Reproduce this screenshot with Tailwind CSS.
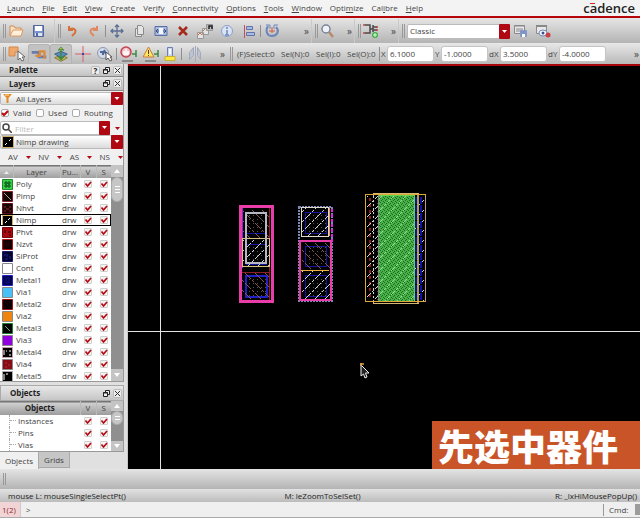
<!DOCTYPE html>
<html lang="en">
<head>
    <meta charset="UTF-8">
    <meta name="viewport" content="width=device-width, initial-scale=1.0">
    <title>Layout Editor</title>
    <script src="https://cdn.jsdelivr.net/npm/@tailwindcss/browser@4"></script>
</head>
<body class="flex flex-col h-screen overflow-hidden bg-[#ececec] text-[#444] text-[8px] leading-[12px] font-['Open_Sans','Noto_Sans',sans-serif]">

    <!-- menu bar -->
    <header class="flex items-center h-[18px] shrink-0 pl-[7px] pr-[5px] bg-[#f3f3f3] border-b-2 border-[#b5060c]">
        <nav id="menu" class="flex gap-[8px]"></nav>
        <div class="relative ml-auto text-[13px] leading-[14px] font-semibold text-[#222]">cadence<span class="absolute left-[7px] top-[2px] w-[5px] h-px bg-[#d22]"></span></div>
    </header>

    <!-- toolbar 1 -->
    <div class="flex h-[25px] shrink-0 pt-px bg-linear-to-b from-[#e6e6e6] to-[#b4b4b4]">
        <div class="flex items-center w-[55px] shrink-0 pl-[3px] border-r border-[#c9c9c9]">
            <i class="w-[3px] h-[14px] border-x border-[#999]"></i>
            <button aria-label="Open" class="w-[22px] h-[20px]"><svg viewBox="0 0 22 20"><path d="M4 15V5h4l1 2h6v2" fill="#fbe3c4" stroke="#d08a52"/><path d="M4 15l3-6h10l-2 6z" fill="#fff0dc" stroke="#d99a66"/></svg></button>
            <button aria-label="Save" class="w-[22px] h-[20px]"><svg viewBox="0 0 22 20"><path d="M5.500 4.500h10v11h-10z" fill="#7d93cc" stroke="#52659c"/><path d="M7 5h7v5H7z" fill="#fff"/><path d="M7 12h7v3H7z" fill="#dfe5f4"/><path d="M8 12h2v3H8z" fill="#52659c"/></svg></button>
        </div>
        <div class="flex items-center w-[257px] shrink-0 pl-[3px] pr-[2px] border-r border-[#c9c9c9]">
            <i class="w-[3px] h-[14px] border-x border-[#999]"></i>
            <button aria-label="Undo" class="w-[22px] h-[20px]"><svg viewBox="0 0 22 20" fill="none" stroke="#d4703c" stroke-width="2"><path d="M8 9c3-3 8-1 6 3l-3 3"/><path d="M8 5v4h4"/></svg></button>
            <button aria-label="Redo" class="w-[22px] h-[20px]"><svg viewBox="0 0 22 20" fill="none" stroke="#dd8a60" stroke-width="2"><path d="M14 9c-3-3-8-1-6 3l3 3"/><path d="M14 5v4h-4"/></svg></button>
            <i class="w-px h-[12px] bg-[#8e8e8e]"></i>
            <button aria-label="Move" class="w-[22px] h-[20px]"><svg viewBox="0 0 22 20" fill="none" stroke="#5b6f94" stroke-width="1.300"><path d="M11 4v12M5 10h12M9 6l2-2 2 2M9 14l2 2 2-2M7 8l-2 2 2 2M15 8l2 2-2 2"/></svg></button>
            <button aria-label="Copy" class="w-[22px] h-[20px]"><svg viewBox="0 0 22 20" fill="#e4e4e4" stroke="#8a8a8a"><path d="M7.500 7.500h6v8h-6z"/><path d="M9.500 4.500h4l2 2v7h-6z"/></svg></button>
            <button aria-label="Stretch" class="w-[22px] h-[20px]"><svg viewBox="0 0 22 20"><path d="M5 5.500h12v9H5z" fill="#a9bae0" stroke="#5a6fa4"/><path d="M9 7h4v6H9z" fill="#f4f6fc"/><path d="M9 10H6m2-2l-2 2 2 2M13 10h3m-2-2l2 2-2 2" fill="none" stroke="#34508c"/></svg></button>
            <button aria-label="Delete" class="w-[22px] h-[20px]"><svg viewBox="0 0 22 20" stroke="#a32a1c" stroke-width="2.500"><path d="M7 6l8 8M15 6l-8 8"/></svg></button>
            <button aria-label="Repeat" class="w-[22px] h-[20px]"><svg viewBox="0 0 22 20" fill="#e4e4e4" stroke="#999"><path d="M3.500 11.500h6v6h-6zM8.500 7.500h6v6h-6z"/><path d="M12.500 3.500h6v6h-6z" fill="#bbb"/><path d="M15 8V5h3v3" stroke="#222" fill="none" stroke-width="1.500"/><path d="M4 14l2-2 2 2M9 10l2-2" stroke="#d4703c" fill="none"/></svg></button>
            <button aria-label="Info" class="w-[22px] h-[20px]"><svg viewBox="0 0 22 20"><circle cx="11" cy="10" r="5.500" fill="#dbe4f3" stroke="#8aa0c8"/><path d="M11 6v2M11 9v5M9 14h4" stroke="#6c88c0" stroke-width="1.500"/></svg></button>
            <button aria-label="Align" class="w-[22px] h-[20px]"><svg viewBox="0 0 22 20"><path d="M6.500 4v13" stroke="#d04858"/><path d="M8.500 5.500h6v3h-6zM8.500 11.500h8v3h-8z" fill="#a9bbe2" stroke="#5f75aa"/></svg></button>
            <i class="w-px h-[12px] bg-[#8e8e8e]"></i>
            <button aria-label="Rotate" class="w-[22px] h-[20px]"><svg viewBox="0 0 22 20" fill="none"><path d="M7 5c-3 5-1 10 4 10s8-5 4-9" stroke="#6c86bc" stroke-width="2"/><path d="M5 4h4v4M17 4h-4v4" stroke="#6c86bc"/><path d="M11 6v6M8 10h6" stroke="#d45a3c"/></svg></button>
            <span class="ml-auto text-[10px]">»</span>
        </div>
        <div class="flex items-center w-[43px] shrink-0 pl-[3px] pr-[2px] border-r border-[#c9c9c9]">
            <i class="w-[3px] h-[14px] border-x border-[#999]"></i>
            <button aria-label="Zoom" class="w-[20px] h-[20px]"><svg viewBox="0 0 20 20"><path d="M11 11l4 5" stroke="#b9896a" stroke-width="2.500"/><circle cx="8" cy="8" r="4" fill="#eef3fa" stroke="#7c8596" stroke-width="1.500"/></svg></button>
            <span class="ml-auto text-[10px]">»</span>
        </div>
        <div class="flex items-center w-[44px] shrink-0 pl-[3px] pr-[2px] border-r border-[#c9c9c9]">
            <i class="w-[3px] h-[14px] border-x border-[#999]"></i>
            <button aria-label="Hierarchy" class="w-[20px] h-[20px]"><svg viewBox="0 0 20 20" fill="none"><path d="M4 4h5v8H4M9 8h3M12 4v7M12 6h4M12 9h4" stroke="#4a4a4a" stroke-width="1.500"/><path d="M3 3v2M3 11v2M16 5v2M16 8v2" stroke="#c04038" stroke-width="1.500"/><circle cx="14" cy="14" r="3" fill="#3fae4a"/><path d="M12 14h4M14 12v4" stroke="#dfd"/></svg></button>
            <span class="ml-auto text-[10px]">»</span>
        </div>
        <div class="flex items-center grow pl-[3px]">
            <i class="w-[3px] h-[14px] border-x border-[#999] mr-[2px]"></i>
            <div class="relative w-[103px] h-[15px]">
                <select aria-label="Workspace" class="appearance-none w-full h-full pl-[2px] bg-white border border-[#bbb] rounded-[2px]"><option>Classic</option></select>
                <svg class="absolute right-0 top-0 w-[11px] h-[15px] pointer-events-none" viewBox="0 0 11 15"><rect width="11" height="15" rx="1" fill="#b00812"/><path d="M3 6h5L5.500 9z" fill="#fff"/></svg>
            </div>
            <button aria-label="Save workspace" class="w-[22px] h-[20px]"><svg viewBox="0 0 22 20"><path d="M4.500 4.500h10v8h-10z" fill="#e8e8e8" stroke="#8a8a8a"/><path d="M4 5h11M6 8h7M6 10h5" stroke="#888"/><path d="M10.500 9.500h6v6h-6z" fill="#7d93cc" stroke="#8898c0"/><path d="M12 13h3v3h-3z" fill="#fff"/></svg></button>
            <button aria-label="Delete workspace" class="w-[22px] h-[20px]"><svg viewBox="0 0 22 20"><path d="M4.500 4.500h10v8h-10z" fill="#e8e8e8" stroke="#8a8a8a"/><path d="M4 5h11" stroke="#888" stroke-width="2"/><ellipse cx="11" cy="12" rx="4" ry="3" fill="#fff" stroke="#6c86bc"/><circle cx="11" cy="12" r="1.500" fill="#34508c"/><circle cx="16" cy="14" r="2.500" fill="#cc4048"/></svg></button>
        </div>
    </div>

    <!-- toolbar 2 -->
    <div class="flex h-[21px] shrink-0 bg-linear-to-b from-[#e8e8e8] to-[#b9b9b9]">
        <div class="flex items-center w-[227px] shrink-0 pl-[3px]">
            <i class="w-[3px] h-[14px] border-x border-[#999]"></i>
            <button aria-label="Partial select" class="w-[22px] h-[20px]"><svg viewBox="0 0 22 20"><path d="M3 3h9v5H9v4H3z" fill="#f0a868" stroke="#d08a52"/><path d="M12 7v9l2-2 2 3 2-1-2-3h3z" fill="#fff" stroke="#666"/></svg></button>
            <button aria-label="Wire" class="w-[22px] h-[20px] rounded-[2px] bg-[#c2c2c2] border border-[#b4b4b4]"><svg viewBox="0 0 22 20" fill="none"><path d="M3 8h8v5h8" stroke="#6c7ca8" stroke-width="3"/><path d="M7 12h5V7h5v8" stroke="#dc8a3c" stroke-width="2.500"/></svg></button>
            <button aria-label="Layers" class="w-[22px] h-[20px] rounded-[2px] bg-[#c2c2c2] border border-[#b4b4b4]"><svg viewBox="0 0 22 20"><path d="M4 14l7-3 7 3-7 4z" fill="#c8b850" stroke="#7c7430"/><path d="M4 10l7-3 7 3-7 4z" fill="#5a8ac0" stroke="#34607c"/><path d="M11 15V3M8 6l3-3 3 3M8 13l3 3 3-3" fill="none" stroke="#3f8a38" stroke-width="1.500"/><path d="M10 4h2" stroke="#e0c840"/></svg></button>
            <button aria-label="Cross" class="w-[22px] h-[20px]"><svg viewBox="0 0 22 20"><path d="M11 2v16M3 10h16" stroke="#d86068"/><path d="M10 10h2" stroke="#44a" stroke-width="2"/></svg></button>
            <button aria-label="Snap" class="w-[22px] h-[20px]"><svg viewBox="0 0 22 20"><circle cx="9" cy="9" r="5.500" fill="#d4dae6" stroke="#8c98ae"/><path d="M6 8h3v3M10 6l2 4" stroke="#4c66a0" stroke-width="2" fill="none"/><path d="M12 8v8l2-2 2 3 2-1-2-3h2z" fill="#fff" stroke="#555"/></svg></button>
            <i class="w-px h-[12px] bg-[#8e8e8e]"></i>
            <button aria-label="Stop" class="w-[22px] h-[20px]"><svg viewBox="0 0 22 20"><path d="M5 17h11" stroke="#555"/><path d="M15 10h4M19 6v7" stroke="#3c8a44" stroke-width="1.500"/><circle cx="9" cy="8" r="5" fill="#f0c0c4" stroke="#c44450" stroke-width="1.500"/><path d="M7 11V7M9 11V5M11 11V7M7 10h4" stroke="#fff" stroke-width="1.500"/></svg></button>
            <button aria-label="Warning" class="w-[22px] h-[20px]"><svg viewBox="0 0 22 20"><path d="M6 17h11" stroke="#555"/><path d="M15 10h4M19 6v7" stroke="#3c8a44" stroke-width="1.500"/><path d="M9.500 3l5.500 10H4z" fill="#ffe45c" stroke="#c87c3c"/><path d="M9.500 6v4M9.500 11v1" stroke="#444"/></svg></button>
            <button aria-label="Mark" class="w-[20px] h-[20px]"><svg viewBox="0 0 20 20"><path d="M6.500 3.500h5v9h-5z" fill="#c8d4f0" stroke="#6c80b0"/><path d="M8 5h2v5H8z" fill="#fff"/><path d="M4 12.500h10v4H4z" fill="#ffe83c" stroke="#c8b030"/></svg></button>
            <i class="w-px h-[12px] bg-[#8e8e8e]"></i>
            <button aria-label="Flip" class="w-[26px] h-[20px]"><svg viewBox="0 0 26 20" fill="#bcc4d4" stroke="#a2a9b8"><path d="M11.500 3.500v8l-4 4v-7zM15.500 3.500v8l3 4v-7z"/><path d="M13.500 2v16"/></svg></button>
            <span class="ml-auto mr-[2px] text-[10px]">»</span>
        </div>
        <div class="flex items-center grow pl-[3px] pr-px">
            <i class="w-[3px] h-[14px] border-x border-[#999] mr-[4px]"></i>
            <span class="w-[44px] shrink-0 whitespace-nowrap">(F)Select:0</span>
            <span class="w-[35px] shrink-0 whitespace-nowrap">Sel(N):0</span>
            <span class="w-[31px] shrink-0 whitespace-nowrap">Sel(I):0</span>
            <span class="w-[32px] shrink-0 whitespace-nowrap">Sel(O):0</span>
            <i class="w-px h-[14px] bg-[#8e8e8e]"></i>
            <label for="x" class="w-[7px] pl-px">X</label>
            <input id="x" value="6.1000" class="w-[47px] h-[16px] px-[2px] bg-white border border-[#c4c4c4] rounded-[3px]">
            <label for="y" class="w-[7px] pl-px">Y</label>
            <input id="y" value="-1.0000" class="w-[47px] h-[16px] px-[2px] bg-white border border-[#c4c4c4] rounded-[3px]">
            <label for="dx" class="w-[12px] pl-px">dX</label>
            <input id="dx" value="3.5000" class="w-[47px] h-[16px] px-[2px] bg-white border border-[#c4c4c4] rounded-[3px]">
            <label for="dy" class="w-[12px] pl-px">dY</label>
            <input id="dy" value="-4.0000" class="w-[47px] h-[16px] px-[2px] bg-white border border-[#c4c4c4] rounded-[3px]">
            <span class="ml-auto text-[10px]">»</span>
        </div>
    </div>

    <main class="flex grow min-h-0">
        <!-- palette dock -->
        <aside class="flex flex-col w-[128px] shrink-0 pr-[3px] bg-[#e0e0e0] border-r border-[#c8c8c8]">
            <div class="flex flex-col border-r border-[#999] bg-[#f0f0f0]">
                <h2 class="flex items-center h-[13px] pl-[9px] pr-px gap-[2px] font-bold text-[#222] bg-linear-to-b from-[#e4e4e4] to-[#c2c2c2] border-b border-[#888]">
                    <span class="mr-auto">Palette</span>
                    <button aria-label="Help" class="w-[9px] h-[9px] leading-[8px] bg-[#eee] border border-[#bbb] rounded-[2px]">?</button>
                    <button aria-label="Float" class="w-[9px] h-[9px]"><svg viewBox="0 0 9 9" fill="#eee" stroke="#222"><path d="M3.500 1.500h4v4h-4z"/><path d="M1.500 3.500h4v4h-4zM1 4h5"/></svg></button>
                    <button aria-label="Close" class="w-[9px] h-[9px] bg-[#eee] border border-[#bbb] rounded-[2px]"><svg viewBox="0 0 7 7" stroke="#333"><path d="M1 1l5 5M6 1L1 6"/></svg></button>
                </h2>
                <h2 class="flex items-center h-[14px] pl-[9px] pr-px gap-[2px] font-bold text-[#222] bg-linear-to-b from-[#e4e4e4] to-[#c2c2c2] border-b border-[#888]">
                    <span class="mr-auto">Layers</span>
                    <button aria-label="Float" class="w-[9px] h-[9px]"><svg viewBox="0 0 9 9" fill="#eee" stroke="#222"><path d="M3.500 1.500h4v4h-4z"/><path d="M1.500 3.500h4v4h-4zM1 4h5"/></svg></button>
                    <button aria-label="Close" class="w-[9px] h-[9px] bg-[#eee] border border-[#bbb] rounded-[2px]"><svg viewBox="0 0 7 7" stroke="#333"><path d="M1 1l5 5M6 1L1 6"/></svg></button>
                </h2>
                <div class="relative h-[13px] mt-px">
                    <select aria-label="Layer filter" class="appearance-none w-full h-full pl-[15px] bg-linear-to-b from-white to-[#dcdcdc] border border-[#bbb] rounded-[2px]"><option>All Layers</option></select>
                    <svg class="absolute left-[3px] top-[2px] w-[9px] h-[9px] pointer-events-none" viewBox="0 0 9 9"><path d="M0 0h9L5.500 4v5h-2V4z" fill="#e08a28"/><path d="M2 1h4" stroke="#ffe0a0"/></svg>
                    <svg class="absolute right-0 top-0 w-[12px] h-[13px] pointer-events-none" viewBox="0 0 12 13"><rect width="12" height="13" rx="1" fill="#b00812"/><path d="M3.500 5h5L6 8z" fill="#fff"/></svg>
                </div>
                <div class="flex items-center h-[15px] pl-px">
                    <span class="relative w-[8px] h-[8px] mr-[4px]"><input id="valid" type="checkbox" checked class="block appearance-none w-[8px] h-[8px] bg-white border border-[#aaa] rounded-[2px]"><svg class="absolute inset-0 pointer-events-none" viewBox="0 0 8 8"><path d="M1 4l2 2 4-4" fill="none" stroke="#c00810" stroke-width="2"/></svg></span>
                    <label for="valid" class="w-[23px]">Valid</label>
                    <input id="used" type="checkbox" class="appearance-none w-[8px] h-[8px] mr-[4px] bg-white border border-[#aaa] rounded-[2px]">
                    <label for="used" class="w-[24px]">Used</label>
                    <input id="routing" type="checkbox" class="appearance-none w-[8px] h-[8px] mr-[4px] bg-white border border-[#aaa] rounded-[2px]">
                    <label for="routing">Routing</label>
                </div>
                <div class="flex items-center h-[14px] mt-px">
                    <div class="relative w-[110px] h-full">
                        <input aria-label="Filter" placeholder="Filter" class="w-full h-full pl-[14px] bg-white border border-[#bbb] rounded-[2px] placeholder:text-[#bbb]">
                        <svg class="absolute left-[2px] top-[2px] w-[10px] h-[10px] pointer-events-none" viewBox="0 0 10 10" fill="none" stroke="#444" stroke-width="1.500"><circle cx="4" cy="4" r="3"/><path d="M6 6l4 4"/></svg>
                        <svg class="absolute right-0 top-0 w-[11px] h-[14px] pointer-events-none" viewBox="0 0 11 14"><rect width="11" height="14" rx="1" fill="#b00812"/><path d="M3 5h5L5.500 8z" fill="#fff"/></svg>
                    </div>
                    <svg class="w-[5px] h-[3px] ml-[5px]" viewBox="0 0 5 3"><path d="M0 0h5L2.500 3z" fill="#b00812"/></svg>
                </div>
                <div class="relative h-[14px]">
                    <select aria-label="Entry layer" class="appearance-none w-full h-full pl-[15px] bg-linear-to-b from-white to-[#dcdcdc] border border-[#bbb] rounded-[2px]"><option>Nimp drawing</option></select>
                    <svg class="absolute left-[2px] top-[1px] w-[12px] h-[12px] pointer-events-none" viewBox="0 0 12 12"><path d="M.5.5h11v11H.5z" fill="#000" stroke="#cdb070"/><path d="M3 9l2-2M7 5l2-2" stroke="#fff"/></svg>
                    <svg class="absolute right-0 top-0 w-[12px] h-[14px] pointer-events-none" viewBox="0 0 12 14"><rect width="12" height="14" rx="1" fill="#b00812"/><path d="M3.500 5h5L6 8z" fill="#fff"/></svg>
                </div>
                <div id="visibility" class="flex items-center justify-between h-[16px] pl-[8px]"></div>
            </div>

            <div class="flex h-[217px] shrink-0 border-r border-b border-[#999] bg-white">
                <table class="grow table-fixed border-collapse h-[216px]">
                    <thead>
                        <tr class="h-[12px] bg-linear-to-b from-[#d0d0d0] to-[#9c9c9c] border-t border-[#777]">
                            <th class="w-[13px] p-0 border-r border-[#bbb]"><svg class="mx-auto w-[5px] h-[3px]" viewBox="0 0 5 3"><path d="M0 3h5L2.500 0z" fill="#eee"/></svg></th>
                            <th class="p-0 font-normal border-r border-[#bbb]">Layer</th>
                            <th class="w-[20px] p-0 font-normal border-r border-[#bbb]">Pu...</th>
                            <th class="w-[16px] p-0 font-normal border-r border-[#bbb]">V</th>
                            <th class="w-[15px] p-0 font-normal">S</th>
                        </tr>
                    </thead>
                    <tbody id="layers"></tbody>
                </table>
                <div class="flex flex-col w-[12px] bg-[#8f8f8f]">
                    <i class="flex items-center justify-center h-[12px] bg-[#c4c4c4]"><svg class="w-[6px] h-[4px]" viewBox="0 0 6 4"><path d="M0 4h6L3 0z" fill="#fff"/></svg></i>
                    <i class="flex flex-col items-center justify-center gap-[2px] h-[25px] rounded-full bg-[#c6c6c6] border border-[#aaa]"><b class="w-[5px] h-px bg-white"></b><b class="w-[5px] h-px bg-white"></b><b class="w-[5px] h-px bg-white"></b></i>
                    <i class="flex items-center justify-center h-[12px] mt-auto bg-[#c4c4c4]"><svg class="w-[6px] h-[4px]" viewBox="0 0 6 4"><path d="M0 0h6L3 4z" fill="#fff"/></svg></i>
                </div>
            </div>

            <h2 class="flex items-center h-[16px] shrink-0 mt-[3px] pl-[9px] pr-px gap-[2px] font-bold text-[#222] bg-linear-to-b from-[#e8e8e8] to-[#c6c6c6] border border-[#aaa]">
                <span class="mr-auto">Objects</span>
                <button aria-label="Float" class="w-[9px] h-[9px]"><svg viewBox="0 0 9 9" fill="#eee" stroke="#222"><path d="M3.500 1.500h4v4h-4z"/><path d="M1.500 3.500h4v4h-4zM1 4h5"/></svg></button>
                <button aria-label="Close" class="w-[9px] h-[9px] bg-[#eee] border border-[#bbb] rounded-[2px]"><svg viewBox="0 0 7 7" stroke="#333"><path d="M1 1l5 5M6 1L1 6"/></svg></button>
            </h2>
            <div class="flex h-[51px] shrink-0 border-r border-b border-[#999] bg-white">
                <table class="grow table-fixed border-collapse h-[48px]">
                    <thead>
                        <tr class="h-[13px] bg-linear-to-b from-[#d0d0d0] to-[#9c9c9c] border-t border-[#777]">
                            <th class="p-0 font-bold text-[#222] border-r border-[#bbb]">Objects</th>
                            <th class="w-[16px] p-0 font-normal border-r border-[#bbb]">V</th>
                            <th class="w-[15px] p-0 font-normal">S</th>
                        </tr>
                    </thead>
                    <tbody id="objects"></tbody>
                </table>
                <div class="flex flex-col w-[12px] bg-[#8f8f8f]">
                    <i class="flex items-center justify-center h-[10px] bg-[#c4c4c4]"><svg class="w-[6px] h-[4px]" viewBox="0 0 6 4"><path d="M0 4h6L3 0z" fill="#fff"/></svg></i>
                    <i class="flex flex-col items-center justify-center gap-[2px] h-[14px] rounded-full bg-[#c6c6c6] border border-[#aaa]"><b class="w-[5px] h-px bg-white"></b><b class="w-[5px] h-px bg-white"></b></i>
                    <i class="flex items-center justify-center h-[10px] mt-auto bg-[#c4c4c4]"><svg class="w-[6px] h-[4px]" viewBox="0 0 6 4"><path d="M0 0h6L3 4z" fill="#fff"/></svg></i>
                </div>
            </div>
            <div class="flex grow">
                <button class="w-[39px] bg-[#f0f0f0] border-r border-[#aaa]">Objects</button>
                <button class="w-[31px] mb-px bg-[#c6c6c6] border-r border-b border-[#aaa]">Grids</button>
            </div>
        </aside>

        <!-- drawing area -->
        <section class="relative grow bg-black border-t-2 border-[#a8060c]">
            <svg class="absolute left-0 top-0 w-full h-full" fill="none" shape-rendering="crispEdges">
                <defs>
                    <pattern id="dots" width="4" height="4" patternUnits="userSpaceOnUse"><path d="M1 1h1v1H1z" fill="#505050"/></pattern>
                    <pattern id="up" width="10" height="10" patternUnits="userSpaceOnUse"><path d="M0 10L10 0" stroke="#d8d8d8" stroke-dasharray="4 1"/></pattern>
                    <pattern id="down" width="10" height="10" patternUnits="userSpaceOnUse"><path d="M0 0l10 10" stroke="#8c5658" stroke-dasharray="4 1"/></pattern>
                    <pattern id="poly" width="4" height="4" patternUnits="userSpaceOnUse"><path d="M0 0h4v4H0z" fill="#50ac50"/><path d="M0 0h1v1H0zM2 1h1v1H2zM1 2h1v1H1zM3 3h1v1H3z" fill="#087808"/></pattern>
                    <pattern id="polyline" width="12" height="12" patternUnits="userSpaceOnUse"><path d="M0 12L12 0" stroke="#84e484" stroke-dasharray="4 1"/></pattern>
                </defs>

                <line x1="32.500" y1="0" x2="32.500" y2="100%" stroke="#e4e4e4"/>
                <line x1="0" y1="265.500" x2="100%" y2="265.500" stroke="#e4e4e4"/>

                <!-- device 1 -->
                <rect x="118" y="147" width="20" height="20" fill="url(#dots)" stroke="#1414a0"/>
                <rect x="118" y="178" width="20" height="20" fill="url(#dots)" stroke="#1414a0"/>
                <rect x="118" y="210" width="21" height="21" fill="url(#dots)" stroke="#2020c8" stroke-width="2"/>
                <rect x="114" y="143" width="28" height="30" fill="url(#down)"/>
                <rect x="114" y="173" width="28" height="28" fill="url(#up)"/>
                <rect x="114" y="206" width="28" height="28" fill="url(#down)"/>
                <path d="M141.500 142v92M113 206.500h29" stroke="#901c24"/>
                <rect x="112.500" y="140.500" width="32" height="95" stroke="#e83ca8" stroke-width="3"/>
                <path d="M114.500 142v60" stroke="#9020e0"/>
                <rect x="114.500" y="172.500" width="27" height="28" stroke="#d8c080"/>
                <rect x="118" y="147" width="20" height="50" stroke="#b8b8c4" stroke-width="2"/>

                <!-- device 2 -->
                <rect x="177" y="146" width="21" height="21" fill="url(#dots)" stroke="#1414a0"/>
                <rect x="177" y="180" width="21" height="20" fill="url(#dots)" stroke="#1414a0"/>
                <rect x="177" y="209" width="21" height="21" fill="url(#dots)" stroke="#1414a0"/>
                <rect x="173" y="142" width="29" height="28" fill="url(#up)"/>
                <rect x="173" y="176" width="29" height="28" fill="url(#down)"/>
                <rect x="173" y="205" width="29" height="28" fill="url(#up)"/>
                <rect x="171" y="141" width="33" height="94" stroke="#7c88b8" stroke-width="2" stroke-dasharray="2 1"/>
                <path d="M204 143v34" stroke="#e020e8" stroke-width="2" stroke-dasharray="3 2"/>
                <rect x="173.500" y="141.500" width="27" height="29" stroke="#e0d8c8"/>
                <path d="M201.500 142v28" stroke="#e0a048"/>
                <rect x="172" y="175" width="31" height="59" stroke="#e83ca8" stroke-width="2"/>
                <path d="M173 204.500h28" stroke="#f0b040"/>

                <!-- device 3 -->
                <path d="M242 132v101" stroke="#901818" stroke-width="2" stroke-dasharray="3 3"/>
                <rect x="239" y="130" width="58" height="105" fill="url(#up)"/>
                <rect x="246" y="130" width="5" height="105" fill="url(#dots)"/>
                <path d="M245.500 130v105" stroke="#d0d0d0" stroke-dasharray="2 2"/>
                <path d="M288 131v103M293 131v103" stroke="#1010b0" stroke-width="2" stroke-dasharray="7 1"/>
                <rect x="251" y="129" width="35" height="107" fill="url(#poly)"/>
                <rect x="251" y="129" width="35" height="107" fill="url(#polyline)"/>
                <path d="M250.500 129v107" stroke="#888"/>
                <path d="M286.500 129v107M251 129.500h35" stroke="#60d850"/>
                <path d="M245.500 130v-2.500h45v110h-45V235" stroke="#d8b870"/>
                <path d="M290 128v109" stroke="#b0a050" stroke-width="2"/>
                <rect x="237.500" y="128.500" width="60" height="107" stroke="#dca838"/>
                <path d="M297.500 130v106" stroke="#c09890"/>
            </svg>
            <svg class="absolute left-[231px] top-[296px] w-[12px] h-[17px]" viewBox="0 0 12 17"><path d="M2 3v11l2.500-2 1.500 4 2-1-1.500-4H10z" fill="#222" stroke="#eee"/><path d="M1 2h4M2 1v3" stroke="#e0a040" stroke-width="1.500"/></svg>
            <div class="absolute right-0 bottom-0 w-[208px] h-[48px] pl-[6px] bg-[#c95427] text-white text-[36px] leading-[48px] font-black whitespace-nowrap font-['Noto_Sans_CJK_SC',sans-serif]" lang="zh-CN">先选中器件</div>
        </section>
    </main>

    <footer class="shrink-0">
        <div class="flex items-center h-[20px] pl-[3px] bg-linear-to-b from-[#e4e4e4] to-[#b4b4b4]"><i class="w-[3px] h-[12px] border-x border-[#999]"></i></div>
        <div class="grid grid-cols-3 items-center h-[13px] pl-[8px] pr-[3px] bg-linear-to-b from-[#e2e2e2] to-[#bcbcbc] text-[#222] whitespace-nowrap">
            <span>mouse L: mouseSingleSelectPt()</span>
            <span class="text-center">M: leZoomToSelSet()</span>
            <span class="text-right">R: _lxHiMousePopUp()</span>
        </div>
        <div class="flex items-center h-[16px] bg-[#efefef] border-b border-[#aaa]">
            <span class="w-[21px] h-full pl-[2px] leading-[15px] bg-[#f2d4d6] border-r border-[#ccc] text-[#8a2a30]">1(2)</span>
            <label for="cmd" class="pl-[5px]">&gt;</label>
            <input id="cmd" class="grow h-full bg-transparent">
            <span class="w-[32px] pl-[5px] border-l border-[#999]">Cmd:</span>
            <i class="w-[5px] h-[11px] bg-[#9c9c9c]"></i>
        </div>
    </footer>

    <script>
        // label and the index of its underlined letter
        const menu = [["Launch", 0], ["File", 0], ["Edit", 0], ["View", 0], ["Create", 0], ["Verify", 3], ["Connectivity", 0],
            ["Options", 0], ["Tools", 0], ["Window", 0], ["Optimize", 4], ["Calibre", 3], ["Help", 0]];
        document.getElementById("menu").innerHTML = menu.map(([t, i]) =>
            `<a href="#">${t.slice(0, i)}<u>${t[i]}</u>${t.slice(i + 1)}</a>`).join("");

        document.getElementById("visibility").innerHTML = ["AV", "NV", "AS", "NS"].map(t =>
            `<button class="flex items-center gap-[8px]">${t}<svg class="w-[5px] h-[3px]" viewBox="0 0 5 3"><path d="M0 0h5L2.500 3z" fill="#b00812"/></svg></button>`).join("");

        const check = label => `<td class="p-0"><span class="relative block mx-auto w-[8px] h-[8px]"><input type="checkbox" checked aria-label="${label}" class="block appearance-none w-[8px] h-[8px] bg-[#f4f4f4] border border-[#d0d0d0] rounded-[1px]"><svg class="absolute inset-0 pointer-events-none" viewBox="0 0 8 8"><path d="M1.500 3.500l2 2.500 3.500-4" fill="none" stroke="#b80810" stroke-width="1.700"/></svg></span></td>`;

        // name, fill, border, pattern colour, pattern path
        const layers = [
            ["Poly", "#38d048", "#208828", "#0a5014", "M3 3h2v2H3zM6 3h2v2H6zM3 6h2v2H3zM6 6h2v2H6z"],
            ["Pimp", "#100404", "#882030", "#c89090", "M2 2l7 7"],
            ["Nhvt", "#180404", "#601018", "#a02028", "M3 3v2M8 3v2M4 6h3M2 8h2M7 8h2"],
            ["Nimp", "#000", "#d8b060", "#fff", "M3 8l2-2M6 5l2-2"],
            ["Phvt", "#a80810", "#700810", "#200", "M3 3v3M6 5h3M7 8h2"],
            ["Nzvt", "#100", "#b01018", "#300", "M4 4h3v3H4z"],
            ["SiProt", "#04042c", "#181870", "#2020a0", "M2 4h2M5 3v3M8 5v3M3 8h3"],
            ["Cont", "#fff", "#888", "#fff", ""],
            ["Metal1", "#04044c", "#2020c8", "#101088", "M4 3h3v5H4z"],
            ["Via1", "#48c0f8", "#888", "#48c0f8", ""],
            ["Metal2", "#080000", "#a01018", "#400", "M3 3h1M7 3h1M5 5h1M3 8h1M7 8h1"],
            ["Via2", "#f08410", "#888", "#f08410", ""],
            ["Metal3", "#000", "#208030", "#50c060", "M3 3l5 5"],
            ["Via3", "#9000e0", "#888", "#9000e0", ""],
            ["Metal4", "#000", "#c8a0b0", "#fff", "M2 3v5M8 3v2M8 7v2M4 4h1"],
            ["Via4", "#880c14", "#888", "#b03038", "M3 4h2M6 6h2M3 8h2"],
            ["Metal5", "#000", "#aaa", "#fff", "M2 3v6M4 3h2"]
        ];
        document.getElementById("layers").innerHTML = layers.map(([name, fill, edge, ink, d]) => `
            <tr class="${name === "Nimp" ? "h-[12px] outline outline-black -outline-offset-1" : "h-[12px]"}">
                <td class="p-0"><svg class="w-[11px] h-[11px] ml-[2px]" viewBox="0 0 11 11"><path d="M.5.5h10v10H.5z" fill="${fill}" stroke="${edge}"/><path d="${d}" fill="none" stroke="${ink}"/></svg></td>
                <td class="p-0 pl-[3px]">${name}</td>
                <td class="p-0 pl-[2px]">drw</td>${check(name + " visible")}${check(name + " selectable")}
            </tr>`).join("");

        document.getElementById("objects").innerHTML = ["Instances", "Pins", "Vias"].map(name => `
            <tr class="h-[12px]">
                <td class="p-0 pl-[9px]"><div class="flex items-center"><i class="h-[12px] border-l border-dotted border-[#aaa]"></i><i class="w-[6px] mr-[2px] border-t border-dotted border-[#aaa]"></i>${name}</div></td>${check(name + " visible")}${check(name + " selectable")}
            </tr>`).join("");
    </script>
</body>
</html>
